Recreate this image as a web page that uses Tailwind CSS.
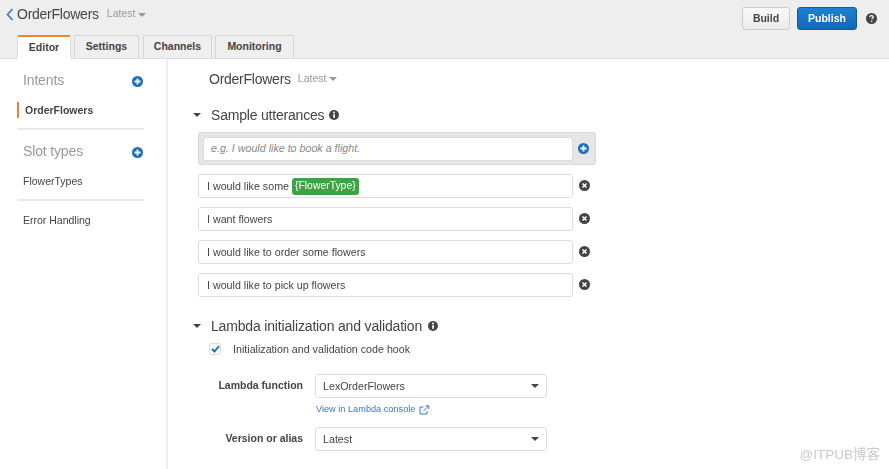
<!DOCTYPE html>
<html>
<head>
<meta charset="utf-8">
<script src="https://cdn.jsdelivr.net/npm/@tailwindcss/browser@4"></script>
</head>
<body class="w-[889px] h-[469px] overflow-hidden bg-white text-[#444] font-['Liberation_Sans',sans-serif] relative blur-[0.3px]">

<!-- Header -->
<div class="h-[59px] bg-[#eeeeee] border-b border-[#dcdcdc] flex flex-col relative">
    <div class="h-[35px] flex items-start justify-between">
        <div class="flex items-center pt-[4px]">
            <svg class="ml-[6px] mr-[3px]" width="8" height="13" viewBox="0 0 8 13" fill="none"><path d="M6.5 1 1.5 6.5l5 5.5" stroke="#3b78b5" stroke-width="1.6"/></svg>
            <span class="text-[14px] tracking-[-0.25px] leading-[20px] text-[#444]">OrderFlowers</span>
            <span class="ml-[8px] text-[10.5px] text-[#999]">Latest</span>
            <span class="ml-[3px] mt-[1px] border-x-[4px] border-x-transparent border-t-[4px] border-t-[#999]"></span>
        </div>
        <div class="flex items-center pt-[7px] pr-[12px]">
            <div class="w-[48px] h-[23px] rounded-[3px] border border-[#ccc] bg-gradient-to-b from-[#fafafa] to-[#ebebeb] text-[10.5px] font-bold text-[#444] flex items-center justify-center">Build</div>
            <div class="ml-[7px] w-[60px] h-[23px] rounded-[3px] border border-[#15589e] bg-gradient-to-b from-[#1d80d3] to-[#1268b5] text-[10.5px] font-bold text-white flex items-center justify-center">Publish</div>
            <svg class="ml-[9px]" width="11" height="11" viewBox="0 0 11 11"><circle cx="5.5" cy="5.5" r="5.5" fill="#444"/><path d="M3.7 4.2c0-1 .8-1.6 1.8-1.6s1.8.6 1.8 1.5c0 1.2-1.5 1.2-1.5 2.2" fill="none" stroke="#fff" stroke-width="1.2"/><circle cx="5.7" cy="8.2" r=".8" fill="#fff"/></svg>
        </div>
    </div>
    <div class="flex items-end pl-[17px] gap-[3px] h-[24px] text-[10.5px] font-bold text-[#444]">
        <div class="w-[54px] h-[24px] -mb-px z-10 bg-white border-x border-[#ddd] border-t-2 border-t-[#e8872b] rounded-t-[2px] flex items-center justify-center">Editor</div>
        <div class="w-[65px] h-[23px] bg-[#efefef] border border-b-0 border-[#d5d5d5] rounded-t-[2px] flex items-center justify-center">Settings</div>
        <div class="w-[69px] h-[23px] ml-[1px] bg-[#efefef] border border-b-0 border-[#d5d5d5] rounded-t-[2px] flex items-center justify-center">Channels</div>
        <div class="w-[79px] h-[23px] bg-[#efefef] border border-b-0 border-[#d5d5d5] rounded-t-[2px] flex items-center justify-center">Monitoring</div>
    </div>
</div>

<div class="flex h-[410px]">
    <!-- Sidebar -->
    <div class="w-[168px] shrink-0 border-r-2 border-[#eeeeee] pl-[17px]">
        <div class="w-[127px] h-[71px] border-b-2 border-[#e9e9e9] relative">
            <div class="absolute left-[6px] top-[12px] text-[14px] tracking-[-0.15px] leading-[18px] text-[#999]">Intents</div>
            <svg class="absolute left-[115px] top-[17px]" width="11" height="11" viewBox="0 0 11 11"><circle cx="5.5" cy="5.5" r="5.5" fill="#1a6ebd"/><path d="M5.5 2.5v6M2.5 5.5h6" stroke="#fff" stroke-width="1.8"/></svg>
            <div class="absolute left-0 top-[43px] h-[16px] border-l-2 border-[#e8872b] pl-[6px] text-[10.5px] leading-[16px] font-bold text-[#444]">OrderFlowers</div>
        </div>
        <div class="w-[127px] h-[71px] border-b-2 border-[#e9e9e9] relative">
            <div class="absolute left-[6px] top-[12px] text-[14px] tracking-[-0.15px] leading-[18px] text-[#999]">Slot types</div>
            <svg class="absolute left-[115px] top-[17px]" width="11" height="11" viewBox="0 0 11 11"><circle cx="5.5" cy="5.5" r="5.5" fill="#1a6ebd"/><path d="M5.5 2.5v6M2.5 5.5h6" stroke="#fff" stroke-width="1.8"/></svg>
            <div class="absolute left-[6px] top-[43px] text-[10.5px] leading-[16px] text-[#444]">FlowerTypes</div>
        </div>
        <div class="pl-[6px] pt-[11px] text-[10.5px] leading-[16px] text-[#444]">Error Handling</div>
    </div>

    <!-- Main -->
    <div class="flex-1 pl-[24px]">
        <div class="pl-[17px] pt-[11px] flex items-center h-[29px]">
            <span class="text-[14px] tracking-[-0.25px] leading-[18px] text-[#444]">OrderFlowers</span>
            <span class="ml-[7px] text-[10.5px] text-[#999]">Latest</span>
            <span class="ml-[3px] border-x-[4px] border-x-transparent border-t-[4px] border-t-[#999]"></span>
        </div>

        <div class="mt-[17px] flex items-center h-[20px]">
            <span class="ml-[1px] border-x-[4px] border-x-transparent border-t-[4px] border-t-[#444]"></span>
            <span class="ml-[10px] text-[14px] tracking-[-0.2px] text-[#444]">Sample utterances</span>
            <svg class="ml-[5px]" width="10" height="10" viewBox="0 0 10 10"><circle cx="5" cy="5" r="5" fill="#444"/><rect x="4.2" y="4.2" width="1.7" height="3.6" fill="#fff"/><circle cx="5" cy="2.6" r="1" fill="#fff"/></svg>
        </div>

        <div class="mt-[7px] ml-[6px] w-[398px] h-[33px] bg-[#e6e6e6] border border-[#dadada] rounded-[2px] flex items-center pl-[4px]">
            <div class="w-[370px] h-[24px] bg-white border border-[#ddd] rounded-[3px] pl-[7px] flex items-center italic text-[10.7px] text-[#888]">e.g. I would like to book a flight.</div>
            <svg class="ml-[5px]" width="11" height="11" viewBox="0 0 11 11"><circle cx="5.5" cy="5.5" r="5.5" fill="#1a6ebd"/><path d="M5.5 2.5v6M2.5 5.5h6" stroke="#fff" stroke-width="1.8"/></svg>
        </div>

        <div class="mt-[9px] ml-[6px] flex flex-col gap-[9px]">
            <div class="flex items-center">
                <div class="w-[375px] h-[24px] border border-[#ddd] rounded-[3px] pl-[8px] flex items-center text-[10.7px] text-[#444]">I would like some <span class="ml-[3px] h-[17px] px-[3px] bg-[#41a145] rounded-[3px] text-white text-[10.4px] flex items-center">{FlowerType}</span></div>
                <svg class="ml-[5.5px] -mt-[1px]" width="11" height="11" viewBox="0 0 11 11"><circle cx="5.5" cy="5.5" r="5.5" fill="#444"/><path d="m3.5 3.5 4 4m0-4-4 4" stroke="#fff" stroke-width="1.5"/></svg>
            </div>
            <div class="flex items-center">
                <div class="w-[375px] h-[24px] border border-[#ddd] rounded-[3px] pl-[8px] flex items-center text-[10.7px] text-[#444]">I want flowers</div>
                <svg class="ml-[5.5px] -mt-[1px]" width="11" height="11" viewBox="0 0 11 11"><circle cx="5.5" cy="5.5" r="5.5" fill="#444"/><path d="m3.5 3.5 4 4m0-4-4 4" stroke="#fff" stroke-width="1.5"/></svg>
            </div>
            <div class="flex items-center">
                <div class="w-[375px] h-[24px] border border-[#ddd] rounded-[3px] pl-[8px] flex items-center text-[10.7px] text-[#444]">I would like to order some flowers</div>
                <svg class="ml-[5.5px] -mt-[1px]" width="11" height="11" viewBox="0 0 11 11"><circle cx="5.5" cy="5.5" r="5.5" fill="#444"/><path d="m3.5 3.5 4 4m0-4-4 4" stroke="#fff" stroke-width="1.5"/></svg>
            </div>
            <div class="flex items-center">
                <div class="w-[375px] h-[24px] border border-[#ddd] rounded-[3px] pl-[8px] flex items-center text-[10.7px] text-[#444]">I would like to pick up flowers</div>
                <svg class="ml-[5.5px] -mt-[1px]" width="11" height="11" viewBox="0 0 11 11"><circle cx="5.5" cy="5.5" r="5.5" fill="#444"/><path d="m3.5 3.5 4 4m0-4-4 4" stroke="#fff" stroke-width="1.5"/></svg>
            </div>
        </div>

        <div class="mt-[19px] flex items-center h-[20px]">
            <span class="ml-[1px] border-x-[4px] border-x-transparent border-t-[4px] border-t-[#444]"></span>
            <span class="ml-[10px] text-[14px] tracking-[-0.17px] text-[#444]">Lambda initialization and validation</span>
            <svg class="ml-[6px]" width="10" height="10" viewBox="0 0 10 10"><circle cx="5" cy="5" r="5" fill="#444"/><rect x="4.2" y="4.2" width="1.7" height="3.6" fill="#fff"/><circle cx="5" cy="2.6" r="1" fill="#fff"/></svg>
        </div>

        <div class="mt-[7px] ml-[17px] flex items-center h-[12px]">
            <span class="w-[12px] h-[12px] bg-white border border-[#ddd] rounded-[2px] flex items-center justify-center">
                <svg width="9" height="8" viewBox="0 0 9 8" fill="none"><path d="m1 4 2.5 2.5L8 1" stroke="#1a6ebd" stroke-width="1.9"/></svg>
            </span>
            <span class="ml-[12px] text-[10.7px] text-[#444]">Initialization and validation code hook</span>
        </div>

        <div class="mt-[19px] flex items-center">
            <span class="w-[111px] text-right text-[10.5px] font-bold text-[#444]">Lambda function</span>
            <div class="ml-[12px] w-[232px] h-[24px] border border-[#ddd] rounded-[3px] pl-[7px] pr-[7px] flex items-center justify-between text-[10.7px] text-[#444]">LexOrderFlowers<span class="border-x-[4px] border-x-transparent border-t-[4px] border-t-[#444]"></span></div>
        </div>
        <div class="mt-[5px] ml-[124px] flex items-center h-[13px] text-[9.2px] text-[#3a78b5]">View in Lambda console
            <svg class="ml-[4px]" width="11" height="10" viewBox="0 0 11 10" fill="none" stroke="#3a78b5"><path d="M8 6v3H1V2h3.5"/><path d="M4.5 6 9.5 1M6.5.8h3.3v3.3"/></svg>
        </div>
        <div class="mt-[11px] flex items-center">
            <span class="w-[111px] text-right text-[10.5px] font-bold text-[#444]">Version or alias</span>
            <div class="ml-[12px] w-[232px] h-[24px] border border-[#ddd] rounded-[3px] pl-[7px] pr-[7px] flex items-center justify-between text-[10.7px] text-[#444]">Latest<span class="border-x-[4px] border-x-transparent border-t-[4px] border-t-[#444]"></span></div>
        </div>
    </div>
</div>

<!-- Watermark -->
<div class="absolute right-[9px] top-[447px] text-[13.5px] leading-[16px] text-[#cbcbcb] font-['Liberation_Sans','Noto_Sans_CJK_SC',sans-serif]">@ITPUB博客</div>
</body>
</html>
